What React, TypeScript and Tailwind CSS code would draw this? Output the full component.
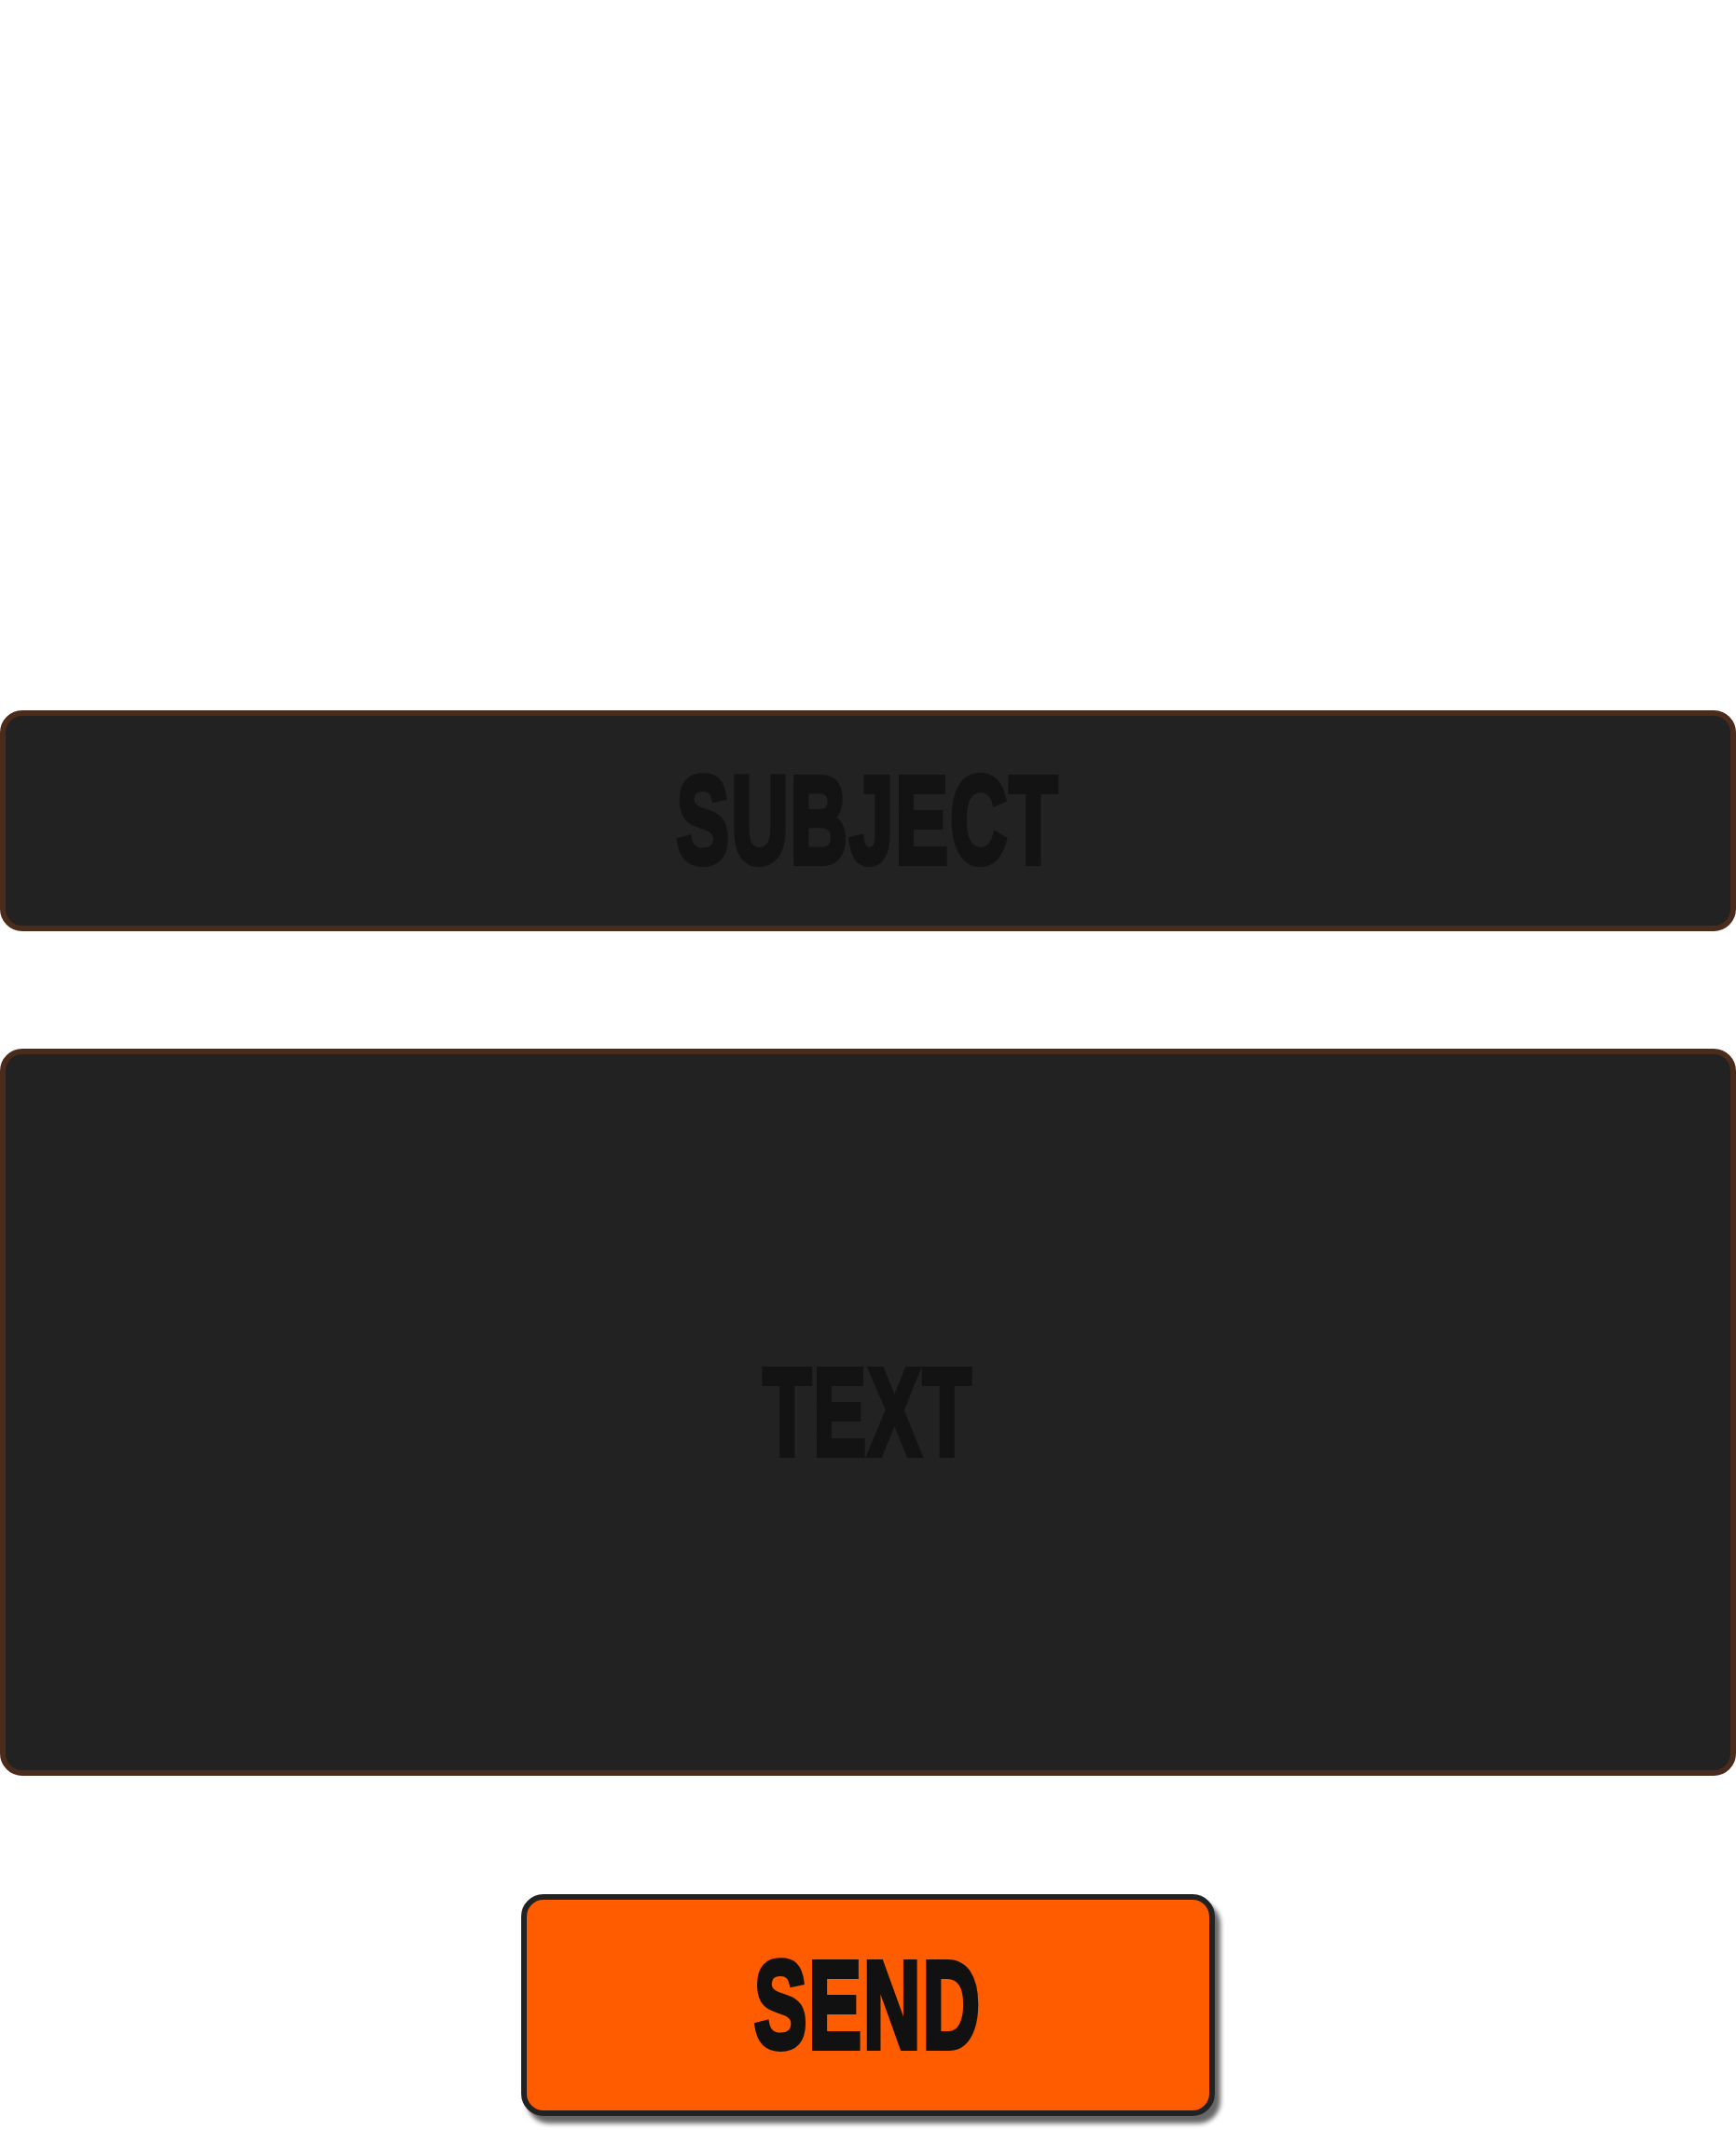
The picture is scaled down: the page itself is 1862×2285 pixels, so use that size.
export default function App() {
  const heading = "inline-block font-['Liberation_Sans',Arial,sans-serif] font-bold text-[133px] leading-none tracking-[3px] scale-x-[0.64] select-none";

  return (
    <div className="flex flex-col items-center w-full min-h-[2285px] bg-white pt-[762px] pb-[15px]">
      {/* subject field */}
      <div className="flex items-center justify-center w-full h-[237px] bg-[#222222] border-[6px] border-[#4b2b1b] rounded-[24px]">
        <span className={`${heading} text-[#131313] [-webkit-text-stroke:6px_#131313]`}>SUBJECT</span>
      </div>

      {/* message field */}
      <div className="flex items-center justify-center w-full h-[780px] mt-[126px] bg-[#222222] border-[6px] border-[#4b2b1b] rounded-[24px]">
        <span className={`${heading} text-[#131313] [-webkit-text-stroke:6px_#131313]`}>TEXT</span>
      </div>

      {/* send button */}
      <button className="flex items-center justify-center w-[744px] h-[238px] mt-[127px] bg-[#ff5c00] border-[6px] border-[#222222] rounded-[24px] shadow-[6px_8px_5px_rgba(0,0,0,0.6)]">
        <span className={`${heading} text-[#111111] [-webkit-text-stroke:6px_#111111]`}>SEND</span>
      </button>
    </div>
  );
}
